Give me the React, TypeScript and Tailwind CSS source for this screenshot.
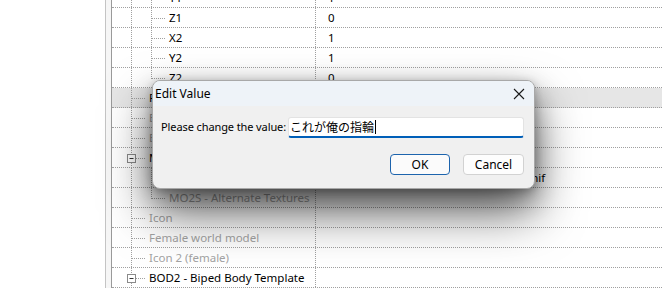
type Row = {
  label: string;
  value?: string;
  level: 1 | 2;
  muted?: boolean;
  box?: boolean;
  last?: boolean;
  selected?: boolean;
};

const rows: Row[] = [
  { label: "Y1", value: "1", level: 2 },
  { label: "Z1", value: "0", level: 2 },
  { label: "X2", value: "1", level: 2 },
  { label: "Y2", value: "1", level: 2 },
  { label: "Z2", value: "0", level: 2, last: true },
  { label: "PTRN - Preview Transform", level: 1, selected: true },
  { label: "EITM - Object Effect", level: 1, muted: true },
  { label: "EAMT - Enchantment Amount", level: 1, muted: true },
  { label: "Male world model", level: 1, box: true },
  { label: "MOD2 - Model FileName", value: "Armor\\Jewelry\\Ring\\CustomRingGO1.nif", level: 2 },
  { label: "MO2S - Alternate Textures", level: 2, muted: true, last: true },
  { label: "Icon", level: 1, muted: true },
  { label: "Female world model", level: 1, muted: true },
  { label: "Icon 2 (female)", level: 1, muted: true },
  { label: "BOD2 - Biped Body Template", level: 1, box: true },
];

const dot = { stroke: "#a0a0a0", strokeWidth: 1, strokeDasharray: "1 1" };

const Guides = ({ row }: { row: Row }) => {
  const w = row.level === 1 ? 27 : 47;
  return (
    <svg width={w} height={20} className="shrink-0">
      {row.box ? (
        <>
          <line x1={10.5} y1={0} x2={10.5} y2={6} {...dot} />
          <line x1={10.5} y1={15} x2={10.5} y2={20} {...dot} />
          <rect x={6.5} y={6.5} width={8} height={8} fill="#fff" stroke="#8a8a8a" />
          <line x1={8.5} y1={10.5} x2={12.5} y2={10.5} stroke="#333" />
          <line x1={15} y1={10.5} x2={25} y2={10.5} {...dot} />
        </>
      ) : (
        <line x1={10.5} y1={0} x2={10.5} y2={20} {...dot} />
      )}
      {row.level === 1 && !row.box && <line x1={11} y1={10.5} x2={25} y2={10.5} {...dot} />}
      {row.level === 2 && (
        <>
          <line x1={30.5} y1={0} x2={30.5} y2={row.last ? 11 : 20} {...dot} />
          <line x1={31} y1={10.5} x2={45} y2={10.5} {...dot} />
        </>
      )}
    </svg>
  );
};

const TreeRow = ({ row }: { row: Row }) => (
  <div
    className={`flex h-[20px] shrink-0 border-b border-dotted border-[#a0a0a0] ${
      row.selected ? "bg-[#e6e6e6]" : ""
    }`}
  >
    <div className="flex w-[204px] shrink-0 items-center border-r border-dotted border-[#a0a0a0] pl-[9px]">
      <Guides row={row} />
      <span className={`whitespace-nowrap pl-[1px] ${row.muted ? "text-[#a3a3a3]" : "text-black"}`}>
        {row.label}
      </span>
    </div>
    <div className="flex items-center whitespace-nowrap pl-[12px] text-black">{row.value}</div>
  </div>
);

const EditDialog = () => (
  <div className="absolute left-[152px] top-[80px] h-[109px] w-[383px] overflow-hidden rounded-[8px] border border-[#a8a8a8] bg-[#f0f0f0] shadow-[0_24px_48px_rgba(0,0,0,0.6),0_10px_24px_rgba(0,0,0,0.3),0_2px_8px_rgba(0,0,0,0.2)]">
    <div className="flex h-[25px] items-center justify-between bg-[#eef3f8] pl-[2px] pr-[9px]">
      <span className="text-[12px] text-black">Edit Value</span>
      <svg width="12" height="12" viewBox="0 0 12 12">
        <path d="M1 1L11 11M11 1L1 11" stroke="#1a1a1a" strokeWidth="1.1" />
      </svg>
    </div>
    <div className="flex flex-col pl-[8px] pr-[10px] pt-[11px]">
      <div className="flex items-center">
        <span className="whitespace-nowrap text-[11px] tracking-[-0.1px] text-black">
          Please change the value:
        </span>
        <div className="ml-auto flex h-[21px] w-[236px] shrink-0 items-center rounded-[3px] border border-b-2 border-[#e3e3e3] border-b-[#005fb8] bg-white pl-[1px] text-[12px] text-black">
          <span className="whitespace-nowrap font-['Noto_Sans_CJK_JP',sans-serif]">これが俺の指輪</span>
          <span className="ml-[1px] h-[14px] w-[1px] bg-black" />
        </div>
      </div>
      <div className="mt-[16px] flex justify-end gap-[13px]">
        <button className="h-[21px] w-[60px] rounded-[4px] border border-[#1d64ad] bg-[#fbfbfb] text-[12px] leading-none text-black">
          OK
        </button>
        <button className="h-[21px] w-[61px] rounded-[4px] border border-[#d2d2d2] bg-[#fdfdfd] text-[12px] leading-none text-black">
          Cancel
        </button>
      </div>
    </div>
  </div>
);

export default function App() {
  return (
    <div className="relative flex h-[288px] w-[662px] overflow-hidden bg-white font-['Noto_Sans','Noto_Sans_CJK_JP',sans-serif] text-[11.5px]">
      <div className="w-[105px] shrink-0 bg-white" />
      <div className="w-[7px] shrink-0 border-l border-r border-l-[#c4c4c4] border-r-[#9a9a9a] bg-[#f6f6f6]" />
      <div className="-mt-[12px] flex flex-1 flex-col">
        {rows.map((r) => (
          <TreeRow key={r.label} row={r} />
        ))}
        <div className="flex flex-1">
          <div className="w-[204px] border-r border-dotted border-[#a0a0a0]" />
        </div>
      </div>
      <EditDialog />
    </div>
  );
}
